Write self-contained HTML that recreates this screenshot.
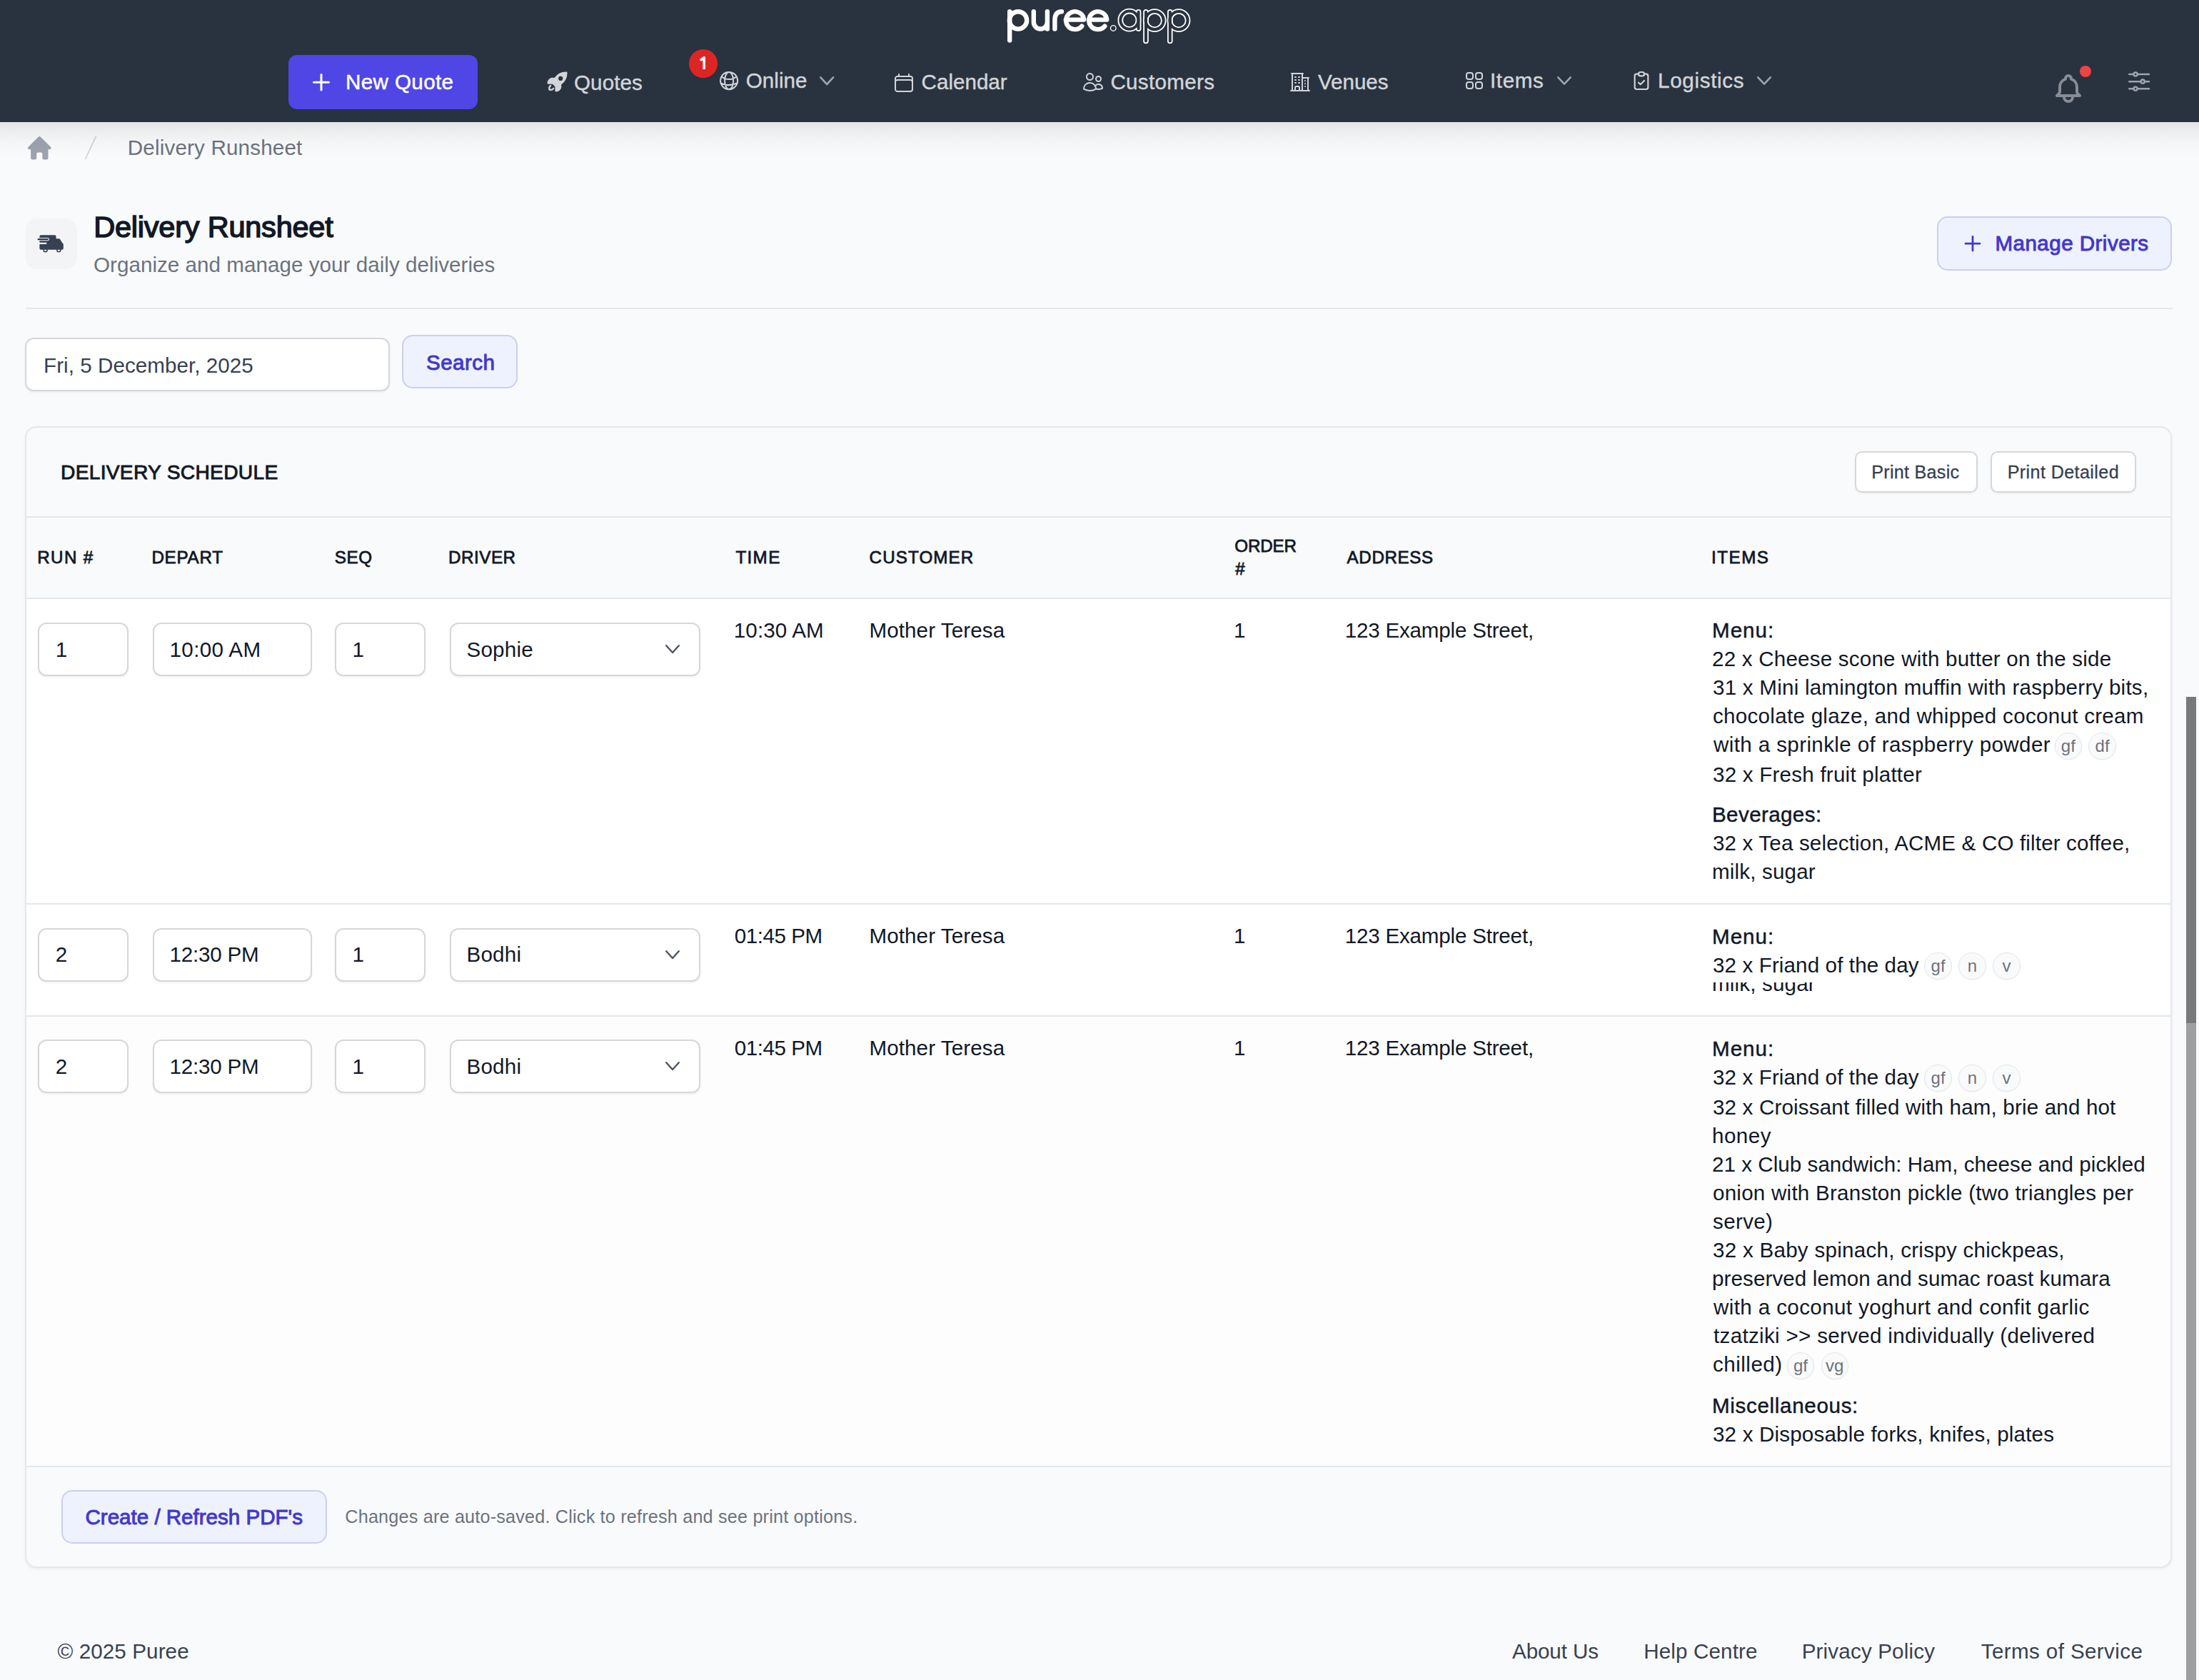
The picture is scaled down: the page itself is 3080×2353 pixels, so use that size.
<!DOCTYPE html><html><head><meta charset="utf-8"><title>Delivery Runsheet</title><style>
html,body{margin:0;padding:0}
@media (max-width:2000px){html{zoom:0.5}}
body{width:3080px;height:2353px;overflow:hidden;position:relative;background:#f9fafb;font-family:"Liberation Sans",sans-serif}
.b{position:absolute;box-sizing:border-box}
.t{position:absolute;white-space:nowrap;line-height:1;font-family:"Liberation Sans",sans-serif}
.inp{position:absolute;box-sizing:border-box;background:#fff;border:2px solid #d5d7da;border-radius:12px;box-shadow:0 2px 3px rgba(0,0,0,.05)}
.ind{position:absolute;box-sizing:border-box;background:#eef2ff;border:2px solid #cbcfef;border-radius:15px}
.bdg{position:absolute;box-sizing:border-box;width:38.4px;height:38.4px;border:1.8px solid #e3e5e8;border-radius:50%;background:#f9fafb;box-shadow:0 1px 2px rgba(0,0,0,.04)}
.bt{position:absolute;width:38.4px;text-align:center;white-space:nowrap;line-height:1;font-size:24px;color:#6b7280;font-family:"Liberation Sans",sans-serif}
</style></head><body>
<div class="b" style="left:0px;top:171px;width:3080px;height:48px;background:linear-gradient(rgba(40,50,40,.10),rgba(40,50,40,.055) 30%,rgba(40,50,40,.02) 65%,rgba(40,50,40,0));z-index:2"></div>
<div class="b" style="left:0px;top:0px;width:3080px;height:171px;background:#29333f;z-index:2"></div>
<div style="position:absolute;left:0;top:0;width:3080px;height:171px;z-index:3">
<svg class="b" style="left:0px;top:0px;" width="3080" height="171" viewBox="0 0 3080 171"><g fill="none" stroke="#fff" stroke-linecap="round" stroke-linejoin="round" stroke-width="6.4">
<path d="M1414.2,16.2V56.6"/><circle cx="1426" cy="28.4" r="12.2"/>
<path d="M1447.8,16.2V31A9.55,9.55 0 0 0 1466.9,31V16.2M1466.9,31V40.6"/>
<path d="M1477.4,40.6V28.5Q1477.4,16.2 1487,16.2"/>
<path d="M1492.8,27.6H1518.1A12.5,12.5 0 1 0 1515.3,36.6"/>
<path d="M1524.9,27.6H1550.2A12.5,12.5 0 1 0 1547.4,36.6"/>
</g>
<circle cx="1559.3" cy="39.4" r="3.8" fill="none" stroke="#fff" stroke-width="1.4"/>
<g fill="none" stroke="#fff" stroke-linecap="round" stroke-linejoin="round" stroke-width="7.6">
<circle cx="1581.9" cy="28.2" r="12.6"/><path d="M1594.6,16.8V40.2"/>
<path d="M1605,16.8V57.4"/><circle cx="1617.2" cy="28.6" r="12.6"/>
<path d="M1638.8,16.8V57.4"/><circle cx="1651" cy="28.6" r="12.6"/>
</g>
<g fill="none" stroke="#29333f" stroke-linecap="round" stroke-linejoin="round" stroke-width="4.0">
<circle cx="1581.9" cy="28.2" r="12.6"/><path d="M1594.6,16.8V40.2"/>
<path d="M1605,16.8V57.4"/><circle cx="1617.2" cy="28.6" r="12.6"/>
<path d="M1638.8,16.8V57.4"/><circle cx="1651" cy="28.6" r="12.6"/>
</g></svg>
<div class="b" style="left:404px;top:77px;width:265px;height:76px;background:#4f46e5;border-radius:12px;box-shadow:0 1px 2px rgba(0,0,0,.1)"></div>
<svg class="b" style="left:436px;top:101px;" width="28" height="28" viewBox="436 101 28 28"><path d="M450,104.5V126M439.5,115.2H460.5" stroke="#fff" stroke-width="3" stroke-linecap="round" fill="none"/></svg>
<svg class="b" style="left:765.3px;top:99.1px;" width="31.1" height="31.1" viewBox="0 0 20 20"><path fill="#d1d5db" fill-rule="evenodd" d="M4.606 12.97a.75.75 0 0 1-.134 1.051 2.494 2.494 0 0 0-.93 2.437 2.494 2.494 0 0 0 2.437-.93.75.75 0 1 1 1.186.918 3.995 3.995 0 0 1-4.482 1.332.75.75 0 0 1-.461-.461 3.994 3.994 0 0 1 1.332-4.482.75.75 0 0 1 1.052.134Z"/><path fill="#d1d5db" fill-rule="evenodd" d="M5.752 12A13.07 13.07 0 0 0 8 14.248v4.002c0 .414.336.75.75.75a5 5 0 0 0 4.797-6.414 12.984 12.984 0 0 0 5.45-10.848.75.75 0 0 0-.735-.735 12.984 12.984 0 0 0-10.849 5.45A5 5 0 0 0 1 11.25c.001.414.337.75.751.75h4.002ZM13 9a2 2 0 1 0 0-4 2 2 0 0 0 0 4Z"/></svg>
<div class="b" style="left:965px;top:69px;width:40px;height:40px;background:#dc2626;border-radius:50%"></div>
<svg class="b" style="left:1004.9px;top:96.7px;" width="32.2" height="32.2" viewBox="0 0 24 24"><path d="M12 21a9.004 9.004 0 0 0 8.716-6.747M12 21a9.004 9.004 0 0 1-8.716-6.747M12 21c2.485 0 4.5-4.03 4.5-9S14.485 3 12 3m0 18c-2.485 0-4.5-4.03-4.5-9S9.515 3 12 3m0 0a8.997 8.997 0 0 1 7.843 4.582M12 3a8.997 8.997 0 0 0-7.843 4.582m15.686 0A11.953 11.953 0 0 1 12 10.5c-2.998 0-5.74-1.1-7.843-2.918m15.686 0A8.959 8.959 0 0 1 21 12c0 .778-.099 1.533-.284 2.253m0 0A17.919 17.919 0 0 1 12 16.5c-3.162 0-6.133-.815-8.716-2.247m0 0A9.015 9.015 0 0 1 3 12c0-1.605.42-3.113 1.157-4.418" fill="none" stroke="#d1d5db" stroke-width="1.5" stroke-linecap="round" stroke-linejoin="round"/></svg>
<svg class="b" style="left:1249.8px;top:99.5px;" width="32" height="32" viewBox="0 0 24 24"><path d="M6.75 3v2.25M17.25 3v2.25M3 18.75V7.5a2.25 2.25 0 0 1 2.25-2.25h13.5A2.25 2.25 0 0 1 21 7.5v11.25m-18 0A2.25 2.25 0 0 0 5.25 21h13.5A2.25 2.25 0 0 0 21 18.75m-18 0v-7.5A2.25 2.25 0 0 1 5.25 9h13.5A2.25 2.25 0 0 1 21 11.25v7.5" fill="none" stroke="#d1d5db" stroke-width="1.5" stroke-linecap="round" stroke-linejoin="round"/></svg>
<svg class="b" style="left:1514.8px;top:98.9px;" width="32" height="32" viewBox="0 0 24 24"><path d="M15 19.128a9.38 9.38 0 0 0 2.625.372 9.337 9.337 0 0 0 4.121-.952 4.125 4.125 0 0 0-7.533-2.493M15 19.128v-.003c0-1.113-.285-2.16-.786-3.07M15 19.128v.106A12.318 12.318 0 0 1 8.624 21c-2.331 0-4.512-.645-6.374-1.766l-.001-.109a6.375 6.375 0 0 1 11.964-3.07M12 6.375a3.375 3.375 0 1 1-6.75 0 3.375 3.375 0 0 1 6.75 0Zm8.25 2.25a2.625 2.625 0 1 1-5.25 0 2.625 2.625 0 0 1 5.25 0Z" fill="none" stroke="#d1d5db" stroke-width="1.5" stroke-linecap="round" stroke-linejoin="round"/></svg>
<svg class="b" style="left:1805px;top:99px;" width="32" height="32" viewBox="0 0 24 24"><path d="M2.25 21h19.5m-18-18v18m10.5-18v18m6-13.5V21M6.75 6.75h.75m-.75 3h.75m-.75 3h.75m3-6h.75m-.75 3h.75m-.75 3h.75M6.75 21v-3.375c0-.621.504-1.125 1.125-1.125h2.25c.621 0 1.125.504 1.125 1.125V21M3 3h12m-.75 4.5H21m-3.75 3h.008v.008h-.008v-.008Zm0 3h.008v.008h-.008v-.008Zm0 3h.008v.008h-.008v-.008Z" fill="none" stroke="#d1d5db" stroke-width="1.5" stroke-linecap="round" stroke-linejoin="round"/></svg>
<svg class="b" style="left:2048.9px;top:96.9px;" width="32" height="32" viewBox="0 0 24 24"><path d="M3.75 6A2.25 2.25 0 0 1 6 3.75h2.25A2.25 2.25 0 0 1 10.5 6v2.25a2.25 2.25 0 0 1-2.25 2.25H6a2.25 2.25 0 0 1-2.25-2.25V6ZM3.75 15.75A2.25 2.25 0 0 1 6 13.5h2.25a2.25 2.25 0 0 1 2.25 2.25V18a2.25 2.25 0 0 1-2.25 2.25H6A2.25 2.25 0 0 1 3.75 18v-2.25ZM13.5 6a2.25 2.25 0 0 1 2.25-2.25H18A2.25 2.25 0 0 1 20.25 6v2.25A2.25 2.25 0 0 1 18 10.5h-2.25a2.25 2.25 0 0 1-2.25-2.25V6ZM13.5 15.75a2.25 2.25 0 0 1 2.25-2.25H18a2.25 2.25 0 0 1 2.25 2.25V18A2.25 2.25 0 0 1 18 20.25h-2.25A2.25 2.25 0 0 1 13.5 18v-2.25Z" fill="none" stroke="#d1d5db" stroke-width="1.5" stroke-linecap="round" stroke-linejoin="round"/></svg>
<svg class="b" style="left:2282.8px;top:97px;" width="32" height="32" viewBox="0 0 24 24"><path d="M9 5H7a2 2 0 0 0-2 2v12a2 2 0 0 0 2 2h10a2 2 0 0 0 2-2V7a2 2 0 0 0-2-2h-2M9 5a2 2 0 0 0 2 2h2a2 2 0 0 0 2-2M9 5a2 2 0 0 1 2-2h2a2 2 0 0 1 2 2m-6 9 2 2 4-4" fill="none" stroke="#d1d5db" stroke-width="1.6" stroke-linecap="round" stroke-linejoin="round"/></svg>
<svg class="b" style="left:1143.6px;top:102.7px;" width="28.40000000000009" height="20.299999999999997" viewBox="1143.6 102.7 28.40000000000009 20.299999999999997"><path d="M1148.8999999999999,108.0L1157.8,117.7L1166.7,108.0" fill="none" stroke="#9ca3af" stroke-width="2.6" stroke-linecap="round" stroke-linejoin="round"/></svg>
<svg class="b" style="left:2177px;top:102.8px;" width="28" height="19.900000000000006" viewBox="2177 102.8 28 19.900000000000006"><path d="M2182.3,108.1L2191.0,117.4L2199.7,108.1" fill="none" stroke="#9ca3af" stroke-width="2.6" stroke-linecap="round" stroke-linejoin="round"/></svg>
<svg class="b" style="left:2457.3px;top:102.8px;" width="28.0" height="19.900000000000006" viewBox="2457.3 102.8 28.0 19.900000000000006"><path d="M2462.6000000000004,108.1L2471.3,117.4L2480.0,108.1" fill="none" stroke="#9ca3af" stroke-width="2.6" stroke-linecap="round" stroke-linejoin="round"/></svg>
<svg class="b" style="left:2873px;top:99.85px;" width="48" height="48" viewBox="0 0 24 24"><path d="M15 17h5l-1.405-1.405A2.032 2.032 0 0 1 18 14.158V11a6.002 6.002 0 0 0-4-5.659V5a2 2 0 1 0-4 0v.341C7.67 6.165 6 8.388 6 11v3.159c0 .538-.214 1.055-.595 1.436L4 17h5m6 0v1a3 3 0 1 1-6 0v-1m6 0H9" fill="none" stroke="#878d97" stroke-width="2" stroke-linecap="round" stroke-linejoin="round"/></svg>
<div class="b" style="left:2912.9px;top:91.8px;width:16.4px;height:16.4px;background:#ef4444;border-radius:50%"></div>
<svg class="b" style="left:2975.7px;top:93.7px;" width="40.3" height="40.3" viewBox="0 0 24 24"><path d="M10.5 6h9.75M10.5 6a1.5 1.5 0 1 1-3 0m3 0a1.5 1.5 0 1 0-3 0M3.75 6H7.5m3 12h9.75m-9.75 0a1.5 1.5 0 0 1-3 0m3 0a1.5 1.5 0 0 0-3 0m-3.75 0H7.5m9-6h3.75m-3.75 0a1.5 1.5 0 0 1-3 0m3 0a1.5 1.5 0 0 0-3 0m-9.75 0h9.75" fill="none" stroke="#9ca3af" stroke-width="1.5" stroke-linecap="round" stroke-linejoin="round"/></svg>
<div class="t" style="left:484.0px;top:100.0px;font-size:29.6px;color:#ffffff;letter-spacing:0.375px;-webkit-text-stroke:0.5px #ffffff;">New Quote</div>
<div class="t" style="left:804.0px;top:100.9px;font-size:29.6px;color:#d1d5db;letter-spacing:0.1px;-webkit-text-stroke:0.4px #d1d5db;">Quotes</div>
<div class="t" style="left:1044.7px;top:98.0px;font-size:29.6px;color:#d1d5db;letter-spacing:0.06px;-webkit-text-stroke:0.4px #d1d5db;">Online</div>
<div class="t" style="left:1290.6px;top:100.4px;font-size:29.6px;color:#d1d5db;-webkit-text-stroke:0.4px #d1d5db;">Calendar</div>
<div class="t" style="left:1555.4px;top:100.0px;font-size:29.6px;color:#d1d5db;letter-spacing:0.325px;-webkit-text-stroke:0.4px #d1d5db;">Customers</div>
<div class="t" style="left:1846.0px;top:100.0px;font-size:29.6px;color:#d1d5db;letter-spacing:-0.04px;-webkit-text-stroke:0.4px #d1d5db;">Venues</div>
<div class="t" style="left:2087.0px;top:98.4px;font-size:29.6px;color:#d1d5db;letter-spacing:0.6px;-webkit-text-stroke:0.4px #d1d5db;">Items</div>
<div class="t" style="left:2322.0px;top:98.4px;font-size:29.6px;color:#d1d5db;letter-spacing:0.688px;-webkit-text-stroke:0.4px #d1d5db;">Logistics</div>
<svg class="b" style="left:970px;top:74px;" width="30" height="30" viewBox="970 74 30 30"><path d="M980.9,84.6L986.2,80.6V97.1" stroke="#fff" stroke-width="3.6" fill="none" stroke-linejoin="round"/></svg>
</div>
<svg class="b" style="left:34.65px;top:186.7px;" width="40.6" height="40.6" viewBox="0 0 20 20"><path fill="#9ca3af" d="M9.293 2.293a1 1 0 0 1 1.414 0l7 7A1 1 0 0 1 17 11h-1v6a1 1 0 0 1-1 1h-2a1 1 0 0 1-1-1v-3a1 1 0 0 0-1-1H9a1 1 0 0 0-1 1v3a1 1 0 0 1-1 1H5a1 1 0 0 1-1-1v-6H3a1 1 0 0 1-.707-1.707l7-7Z"/></svg>
<svg class="b" style="left:110px;top:185px;" width="30" height="45" viewBox="110 185 30 45"><path d="M119.8,222.2L134.4,191.2" stroke="#d1d5db" stroke-width="1.8" stroke-linecap="round"/></svg>
<div class="t" style="left:178.8px;top:192.0px;font-size:29.6px;color:#6b7280;letter-spacing:0.169px;">Delivery Runsheet</div>
<div class="b" style="left:36px;top:305.5px;width:72px;height:71px;background:#f3f4f6;border-radius:16px"></div>
<svg class="b" style="left:45px;top:320px;" width="50" height="40" viewBox="45 320 50 40"><circle cx="63.6" cy="350.2" r="2.5" fill="#f3f4f6" stroke="#374151" stroke-width="1.5"/>
<circle cx="82.3" cy="350.2" r="2.5" fill="#f3f4f6" stroke="#374151" stroke-width="1.5"/>
<path fill="#374151" d="M55.4,331.2q0,-2 2,-2H76.6q2,0 2,2V334.2H82.2q1.4,0 2.2,1.2L86.6,339.2q0.6,1.1 1.4,1.6q0.8,0.5 0.8,1.5V347.7q0,2 -2,2H57.4q-2,0 -2,-2Z"/>
<path d="M50,335.1H66.8" stroke="#f3f4f6" stroke-width="4.4" stroke-linecap="round"/>
<path d="M53.6,335.1H66.8" stroke="#2d3643" stroke-width="2.3" stroke-linecap="round"/>
<path d="M50,340.9H64.4" stroke="#f3f4f6" stroke-width="2.2" stroke-linecap="round"/></svg>
<div class="t" style="left:131.2px;top:297.4px;font-size:41.5px;color:#111827;letter-spacing:-0.219px;-webkit-text-stroke:1.49px #111827;">Delivery Runsheet</div>
<div class="t" style="left:131.0px;top:355.7px;font-size:29.6px;color:#6b7280;letter-spacing:0.035px;">Organize and manage your daily deliveries</div>
<div class="ind" style="left:2713px;top:303px;width:329px;height:76px"></div>
<svg class="b" style="left:2748px;top:327px;" width="30" height="30" viewBox="2748 327 30 30"><path d="M2763,331.5V351M2753,341.2H2773" stroke="#4338ca" stroke-width="2.8" stroke-linecap="round" fill="none"/></svg>
<div class="t" style="left:2794.4px;top:326.2px;font-size:29.6px;color:#4338ca;letter-spacing:0.454px;-webkit-text-stroke:0.95px #4338ca;">Manage Drivers</div>
<div class="b" style="left:36px;top:431px;width:3007px;height:2px;background:#e5e7eb"></div>
<div class="inp" style="left:35px;top:473px;width:511px;height:75px"></div>
<div class="t" style="left:61.0px;top:496.8px;font-size:29.6px;color:#374151;letter-spacing:0.05px;">Fri, 5 December, 2025</div>
<div class="ind" style="left:563px;top:469px;width:162px;height:75px"></div>
<div class="t" style="left:597.0px;top:493.0px;font-size:29.6px;color:#4338ca;letter-spacing:0.46px;-webkit-text-stroke:0.95px #4338ca;">Search</div>
<div class="b" style="left:35px;top:597px;width:3007px;height:1599px;background:#f9fafb;border:2px solid #e5e7eb;border-radius:16px;box-shadow:0 2px 4px rgba(0,0,0,.05);overflow:hidden"></div>
<div class="b" style="left:37px;top:723px;width:3003px;height:2px;background:#e5e7eb"></div>
<div class="t" style="left:85.0px;top:647.2px;font-size:28.2px;color:#111827;letter-spacing:0.281px;-webkit-text-stroke:0.9px #111827;">DELIVERY SCHEDULE</div>
<div class="inp" style="left:2598px;top:632px;width:172px;height:58px;border-radius:10px"></div>
<div class="inp" style="left:2788px;top:632px;width:204px;height:58px;border-radius:10px"></div>
<div class="t" style="left:2621.2px;top:648.8px;font-size:25.2px;color:#374151;letter-spacing:0.25px;-webkit-text-stroke:0.3px #374151;">Print Basic</div>
<div class="t" style="left:2811.7px;top:648.8px;font-size:25.2px;color:#374151;letter-spacing:0.369px;-webkit-text-stroke:0.3px #374151;">Print Detailed</div>
<div class="b" style="left:37px;top:837px;width:3003px;height:2px;background:#e5e7eb"></div>
<div class="t" style="left:52.3px;top:768.9px;font-size:24.2px;color:#111827;letter-spacing:1.35px;-webkit-text-stroke:0.77px #111827;">RUN #</div>
<div class="t" style="left:212.4px;top:768.9px;font-size:24.2px;color:#111827;letter-spacing:0.76px;-webkit-text-stroke:0.77px #111827;">DEPART</div>
<div class="t" style="left:468.7px;top:768.9px;font-size:24.2px;color:#111827;letter-spacing:0.6px;-webkit-text-stroke:0.77px #111827;">SEQ</div>
<div class="t" style="left:628.0px;top:768.9px;font-size:24.2px;color:#111827;letter-spacing:0.54px;-webkit-text-stroke:0.77px #111827;">DRIVER</div>
<div class="t" style="left:1030.4px;top:768.9px;font-size:24.2px;color:#111827;letter-spacing:1.367px;-webkit-text-stroke:0.77px #111827;">TIME</div>
<div class="t" style="left:1217.6px;top:768.9px;font-size:24.2px;color:#111827;letter-spacing:1.1px;-webkit-text-stroke:0.77px #111827;">CUSTOMER</div>
<div class="t" style="left:1886.6px;top:768.9px;font-size:24.2px;color:#111827;letter-spacing:0.617px;-webkit-text-stroke:0.77px #111827;">ADDRESS</div>
<div class="t" style="left:2397.1px;top:768.9px;font-size:24.2px;color:#111827;letter-spacing:1.475px;-webkit-text-stroke:0.77px #111827;">ITEMS</div>
<div class="t" style="left:1729.2px;top:752.9px;font-size:24.2px;color:#111827;letter-spacing:-0.125px;-webkit-text-stroke:0.77px #111827;">ORDER</div>
<div class="t" style="left:1730.2px;top:784.9px;font-size:24.2px;color:#111827;-webkit-text-stroke:0.77px #111827;">#</div>
<div class="b" style="left:37px;top:839px;width:3003px;height:1214px;background:#fff"></div>
<div class="b" style="left:37px;top:1424px;width:3003px;height:630px;background:#fdfdfd"></div>
<div class="b" style="left:37px;top:1265px;width:3003px;height:2px;background:#e5e7eb"></div>
<div class="b" style="left:37px;top:1422px;width:3003px;height:2px;background:#e5e7eb"></div>
<div class="b" style="left:37px;top:2053px;width:3003px;height:2px;background:#e5e7eb"></div>
<div class="inp" style="left:53px;top:872px;width:127px;height:75px"></div>
<div class="inp" style="left:213.5px;top:872px;width:223px;height:75px"></div>
<div class="inp" style="left:469.3px;top:872px;width:127px;height:75px"></div>
<div class="inp" style="left:629.5px;top:872px;width:351px;height:75px"></div>
<svg class="b" style="left:928px;top:898.8px;" width="28" height="20.200000000000045" viewBox="928 898.8 28 20.200000000000045"><path d="M933.2,904.0L942.0,913.8L950.8,904.0" fill="none" stroke="#4b5563" stroke-width="2.4" stroke-linecap="round" stroke-linejoin="round"/></svg>
<div class="inp" style="left:53px;top:1300px;width:127px;height:75px"></div>
<div class="inp" style="left:213.5px;top:1300px;width:223px;height:75px"></div>
<div class="inp" style="left:469.3px;top:1300px;width:127px;height:75px"></div>
<div class="inp" style="left:629.5px;top:1300px;width:351px;height:75px"></div>
<svg class="b" style="left:928px;top:1326.8px;" width="28" height="20.200000000000045" viewBox="928 1326.8 28 20.200000000000045"><path d="M933.2,1332.0L942.0,1341.8L950.8,1332.0" fill="none" stroke="#4b5563" stroke-width="2.4" stroke-linecap="round" stroke-linejoin="round"/></svg>
<div class="inp" style="left:53px;top:1456.4px;width:127px;height:75px"></div>
<div class="inp" style="left:213.5px;top:1456.4px;width:223px;height:75px"></div>
<div class="inp" style="left:469.3px;top:1456.4px;width:127px;height:75px"></div>
<div class="inp" style="left:629.5px;top:1456.4px;width:351px;height:75px"></div>
<svg class="b" style="left:928px;top:1483.2px;" width="28" height="20.200000000000045" viewBox="928 1483.2 28 20.200000000000045"><path d="M933.2,1488.4L942.0,1498.2L950.8,1488.4" fill="none" stroke="#4b5563" stroke-width="2.4" stroke-linecap="round" stroke-linejoin="round"/></svg>
<div class="t" style="left:77.8px;top:894.7px;font-size:29.6px;color:#111827;">1</div>
<div class="t" style="left:237.5px;top:894.7px;font-size:29.6px;color:#111827;letter-spacing:0.357px;">10:00 AM</div>
<div class="t" style="left:493.4px;top:894.7px;font-size:29.6px;color:#111827;">1</div>
<div class="t" style="left:653.5px;top:894.7px;font-size:29.6px;color:#111827;letter-spacing:0.2px;">Sophie</div>
<div class="t" style="left:1027.8px;top:868.3px;font-size:29.6px;color:#111827;letter-spacing:0.114px;">10:30 AM</div>
<div class="t" style="left:1217.5px;top:868.3px;font-size:29.6px;color:#111827;letter-spacing:0.083px;">Mother Teresa</div>
<div class="t" style="left:1728.0px;top:868.3px;font-size:29.6px;color:#111827;">1</div>
<div class="t" style="left:1883.7px;top:868.3px;font-size:29.6px;color:#111827;letter-spacing:-0.206px;">123 Example Street,</div>
<div class="t" style="left:77.8px;top:1322.4px;font-size:29.6px;color:#111827;">2</div>
<div class="t" style="left:237.5px;top:1322.4px;font-size:29.6px;color:#111827;letter-spacing:-0.214px;">12:30 PM</div>
<div class="t" style="left:493.4px;top:1322.4px;font-size:29.6px;color:#111827;">1</div>
<div class="t" style="left:653.5px;top:1322.4px;font-size:29.6px;color:#111827;letter-spacing:0.2px;">Bodhi</div>
<div class="t" style="left:1028.8px;top:1296.0px;font-size:29.6px;color:#111827;letter-spacing:-0.486px;">01:45 PM</div>
<div class="t" style="left:1217.5px;top:1296.0px;font-size:29.6px;color:#111827;letter-spacing:0.083px;">Mother Teresa</div>
<div class="t" style="left:1728.0px;top:1296.0px;font-size:29.6px;color:#111827;">1</div>
<div class="t" style="left:1883.7px;top:1296.0px;font-size:29.6px;color:#111827;letter-spacing:-0.206px;">123 Example Street,</div>
<div class="t" style="left:77.8px;top:1479.1px;font-size:29.6px;color:#111827;">2</div>
<div class="t" style="left:237.5px;top:1479.1px;font-size:29.6px;color:#111827;letter-spacing:-0.214px;">12:30 PM</div>
<div class="t" style="left:493.4px;top:1479.1px;font-size:29.6px;color:#111827;">1</div>
<div class="t" style="left:653.5px;top:1479.1px;font-size:29.6px;color:#111827;letter-spacing:0.2px;">Bodhi</div>
<div class="t" style="left:1028.8px;top:1453.1px;font-size:29.6px;color:#111827;letter-spacing:-0.486px;">01:45 PM</div>
<div class="t" style="left:1217.5px;top:1453.1px;font-size:29.6px;color:#111827;letter-spacing:0.083px;">Mother Teresa</div>
<div class="t" style="left:1728.0px;top:1453.1px;font-size:29.6px;color:#111827;">1</div>
<div class="t" style="left:1883.7px;top:1453.1px;font-size:29.6px;color:#111827;letter-spacing:-0.206px;">123 Example Street,</div>
<div class="t" style="left:2398.0px;top:868.1px;font-size:29.6px;color:#111827;letter-spacing:1.0px;-webkit-text-stroke:0.45px #111827;">Menu:</div>
<div class="t" style="left:2398.0px;top:908.1px;font-size:29.6px;color:#111827;letter-spacing:0.2px;">22 x Cheese scone with butter on the side</div>
<div class="t" style="left:2399.0px;top:948.1px;font-size:29.6px;color:#111827;letter-spacing:0.224px;">31 x Mini lamington muffin with raspberry bits,</div>
<div class="t" style="left:2399.0px;top:988.1px;font-size:29.6px;color:#111827;letter-spacing:0.273px;">chocolate glaze, and whipped coconut cream</div>
<div class="t" style="left:2400.0px;top:1028.1px;font-size:29.6px;color:#111827;letter-spacing:0.374px;">with a sprinkle of raspberry powder</div>
<div class="t" style="left:2399.0px;top:1070.1px;font-size:29.6px;color:#111827;letter-spacing:0.217px;">32 x Fresh fruit platter</div>
<div class="t" style="left:2398.0px;top:1126.1px;font-size:29.6px;color:#111827;letter-spacing:0.378px;-webkit-text-stroke:0.45px #111827;">Beverages:</div>
<div class="t" style="left:2399.0px;top:1166.1px;font-size:29.6px;color:#111827;letter-spacing:0.149px;">32 x Tea selection, ACME &amp; CO filter coffee,</div>
<div class="t" style="left:2398.0px;top:1206.1px;font-size:29.6px;color:#111827;letter-spacing:0.16px;">milk, sugar</div>
<div class="t" style="left:2398.0px;top:1296.6px;font-size:29.6px;color:#111827;letter-spacing:1.0px;-webkit-text-stroke:0.45px #111827;">Menu:</div>
<div class="t" style="left:2399.0px;top:1336.6px;font-size:29.6px;color:#111827;letter-spacing:0.11px;">32 x Friand of the day</div>
<div class="t" style="left:2398.0px;top:1453.6px;font-size:29.6px;color:#111827;letter-spacing:1.0px;-webkit-text-stroke:0.45px #111827;">Menu:</div>
<div class="t" style="left:2399.0px;top:1493.6px;font-size:29.6px;color:#111827;letter-spacing:0.11px;">32 x Friand of the day</div>
<div class="t" style="left:2399.0px;top:1535.6px;font-size:29.6px;color:#111827;letter-spacing:0.156px;">32 x Croissant filled with ham, brie and hot</div>
<div class="t" style="left:2398.0px;top:1575.6px;font-size:29.6px;color:#111827;letter-spacing:0.45px;">honey</div>
<div class="t" style="left:2398.0px;top:1615.6px;font-size:29.6px;color:#111827;letter-spacing:0.031px;">21 x Club sandwich: Ham, cheese and pickled</div>
<div class="t" style="left:2399.0px;top:1655.6px;font-size:29.6px;color:#111827;letter-spacing:0.227px;">onion with Branston pickle (two triangles per</div>
<div class="t" style="left:2399.0px;top:1695.6px;font-size:29.6px;color:#111827;letter-spacing:0.34px;">serve)</div>
<div class="t" style="left:2399.0px;top:1735.6px;font-size:29.6px;color:#111827;letter-spacing:0.257px;">32 x Baby spinach, crispy chickpeas,</div>
<div class="t" style="left:2398.0px;top:1775.6px;font-size:29.6px;color:#111827;letter-spacing:0.092px;">preserved lemon and sumac roast kumara</div>
<div class="t" style="left:2400.0px;top:1815.6px;font-size:29.6px;color:#111827;letter-spacing:0.374px;">with a coconut yoghurt and confit garlic</div>
<div class="t" style="left:2400.0px;top:1855.6px;font-size:29.6px;color:#111827;letter-spacing:0.307px;">tzatziki &gt;&gt; served individually (delivered</div>
<div class="t" style="left:2399.0px;top:1895.6px;font-size:29.6px;color:#111827;letter-spacing:0.486px;">chilled)</div>
<div class="t" style="left:2398.0px;top:1953.6px;font-size:29.6px;color:#111827;letter-spacing:0.662px;-webkit-text-stroke:0.45px #111827;">Miscellaneous:</div>
<div class="t" style="left:2399.0px;top:1993.6px;font-size:29.6px;color:#111827;letter-spacing:0.164px;">32 x Disposable forks, knifes, plates</div>
<div class="bdg" style="left:2877.6px;top:1025.8px"></div>
<div class="bt" style="left:2877.6px;top:1032.6px">gf</div>
<div class="bdg" style="left:2925.4px;top:1025.8px"></div>
<div class="bt" style="left:2925.4px;top:1032.6px">df</div>
<div class="bdg" style="left:2695.4px;top:1333.8px"></div>
<div class="bt" style="left:2695.4px;top:1340.6px">gf</div>
<div class="bdg" style="left:2743.2px;top:1333.8px"></div>
<div class="bt" style="left:2743.2px;top:1340.6px">n</div>
<div class="bdg" style="left:2791.3px;top:1333.8px"></div>
<div class="bt" style="left:2791.3px;top:1340.6px">v</div>
<div class="bdg" style="left:2695.4px;top:1491px"></div>
<div class="bt" style="left:2695.4px;top:1497.8px">gf</div>
<div class="bdg" style="left:2743.2px;top:1491px"></div>
<div class="bt" style="left:2743.2px;top:1497.8px">n</div>
<div class="bdg" style="left:2791.3px;top:1491px"></div>
<div class="bt" style="left:2791.3px;top:1497.8px">v</div>
<div class="bdg" style="left:2502.8px;top:1893.9px"></div>
<div class="bt" style="left:2502.8px;top:1900.7px">gf</div>
<div class="bdg" style="left:2550.6px;top:1893.9px"></div>
<div class="bt" style="left:2550.6px;top:1900.7px">vg</div>
<div style="position:absolute;left:2380px;top:1376px;width:300px;height:40px;overflow:hidden"><div class="t" style="left:18.0px;top:-13.0px;font-size:29.6px;color:#111827;letter-spacing:0.16px">milk, sugar</div></div>
<div class="ind" style="left:86px;top:2087px;width:372px;height:75px"></div>
<div class="t" style="left:119.5px;top:2109.8px;font-size:29.6px;color:#4338ca;letter-spacing:-0.024px;-webkit-text-stroke:0.95px #4338ca;">Create / Refresh PDF&#x27;s</div>
<div class="t" style="left:483.3px;top:2111.8px;font-size:25.2px;color:#6b7280;letter-spacing:0.197px;">Changes are auto-saved. Click to refresh and see print options.</div>
<div class="t" style="left:80.4px;top:2297.9px;font-size:29.6px;color:#374151;letter-spacing:0.109px;">© 2025 Puree</div>
<div class="t" style="left:2118.0px;top:2298.3px;font-size:29.6px;color:#374151;letter-spacing:-0.1px;">About Us</div>
<div class="t" style="left:2302.2px;top:2298.3px;font-size:29.6px;color:#374151;letter-spacing:0.14px;">Help Centre</div>
<div class="t" style="left:2523.7px;top:2298.3px;font-size:29.6px;color:#374151;letter-spacing:0.162px;">Privacy Policy</div>
<div class="t" style="left:2774.8px;top:2298.3px;font-size:29.6px;color:#374151;letter-spacing:0.38px;">Terms of Service</div>
<div class="b" style="left:3062px;top:976px;width:14px;height:457px;background:#787978"></div>
<div class="b" style="left:3062px;top:1433px;width:14px;height:920px;background:#9e9f9e"></div>
</body></html>
